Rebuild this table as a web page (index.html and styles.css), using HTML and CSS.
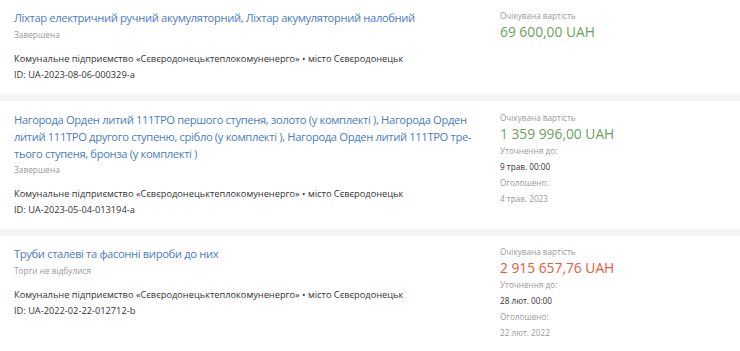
FILE: index.html
```html
<!DOCTYPE html>
<html lang="uk">
<head>
<meta charset="utf-8">
<link rel="stylesheet" href="styles.css">
</head>
<body>
<div class="list">
  <div class="card">
    <div class="main">
      <a class="title" href="#">Ліхтар електричний ручний акумуляторний, Ліхтар акумуляторний налобний</a>
      <div class="status">Завершена</div>
      <div class="org">Комунальне підприємство «Сєвєродонецьктеплокомуненерго» • місто Сєвєродонецьк</div>
      <div class="id">ID: UA-2023-08-06-000329-a</div>
    </div>
    <div class="side">
      <div class="label">Очікувана вартість</div>
      <div class="price green">69 600,00 UAH</div>
    </div>
  </div>
  <div class="card">
    <div class="main">
      <a class="title" href="#">Нагорода Орден литий 111ТРО першого ступеня, золото (у комплекті ), Нагорода Орден литий 111ТРО другого ступеню, срібло (у комплекті ), Нагорода Орден литий 111ТРО тре&shy;тього ступеня, бронза (у комплекті )</a>
      <div class="status">Завершена</div>
      <div class="org">Комунальне підприємство «Сєвєродонецьктеплокомуненерго» • місто Сєвєродонецьк</div>
      <div class="id">ID: UA-2023-05-04-013194-a</div>
    </div>
    <div class="side">
      <div class="label">Очікувана вартість</div>
      <div class="price green">1 359 996,00 UAH</div>
      <div class="label">Уточнення до:</div>
      <div class="value">9 трав. 00:00</div>
      <div class="label">Оголошено:</div>
      <div class="value muted">4 трав. 2023</div>
    </div>
  </div>
  <div class="card">
    <div class="main">
      <a class="title" href="#">Труби сталеві та фасонні вироби до них</a>
      <div class="status">Торги не відбулися</div>
      <div class="org">Комунальне підприємство «Сєвєродонецьктеплокомуненерго» • місто Сєвєродонецьк</div>
      <div class="id">ID: UA-2022-02-22-012712-b</div>
    </div>
    <div class="side">
      <div class="label">Очікувана вартість</div>
      <div class="price red">2 915 657,76 UAH</div>
      <div class="label">Уточнення до:</div>
      <div class="value">28 лют. 00:00</div>
      <div class="label">Оголошено:</div>
      <div class="value muted">22 лют. 2022</div>
    </div>
  </div>
</div>
</body>
</html>
```

FILE: styles.css
```css
html, body {
  margin: 0;
  padding: 0;
  background: #ffffff;
}
body {
  font-family: "Open Sans", "Noto Sans", sans-serif;
  color: #333333;
}
.list {
  display: flex;
  flex-direction: column;
  gap: 7px;
  background: #f4f4f4;
  margin-top: -1px;
}
.card {
  background: #ffffff;
  display: flex;
  padding: 10px 0 11px 14px;
}
.card:last-child {
  padding-top: 9px;
}
.main {
  width: 460px;
  flex: none;
}
.side {
  margin-left: 26px;
  display: flex;
  flex-direction: column;
}
.title {
  display: block;
  font-size: 11.2px;
  letter-spacing: -0.35px;
  line-height: 17px;
  color: #4a7cc6;
  text-decoration: none;
}
.status {
  font-size: 8.3px;
  line-height: 14px;
  color: #9a9a9a;
  margin-top: 1.5px;
}
.org, .id {
  font-size: 9.25px;
  line-height: 16px;
  color: #333333;
}
.org { margin-top: 9px; }
.label {
  font-size: 8.2px;
  line-height: 14px;
  color: #999999;
  margin-top: 2px;
}
.label:first-child { margin-top: 0; }
.price {
  font-size: 13.8px;
  line-height: 18px;
  margin-bottom: -1px;
}
.green { color: #6c9f5c; }
.red { color: #ea5a3c; }
.value {
  font-size: 8.2px;
  line-height: 14px;
  color: #333333;
  margin-top: 2px;
}
.value.muted { color: #999999; }
```
